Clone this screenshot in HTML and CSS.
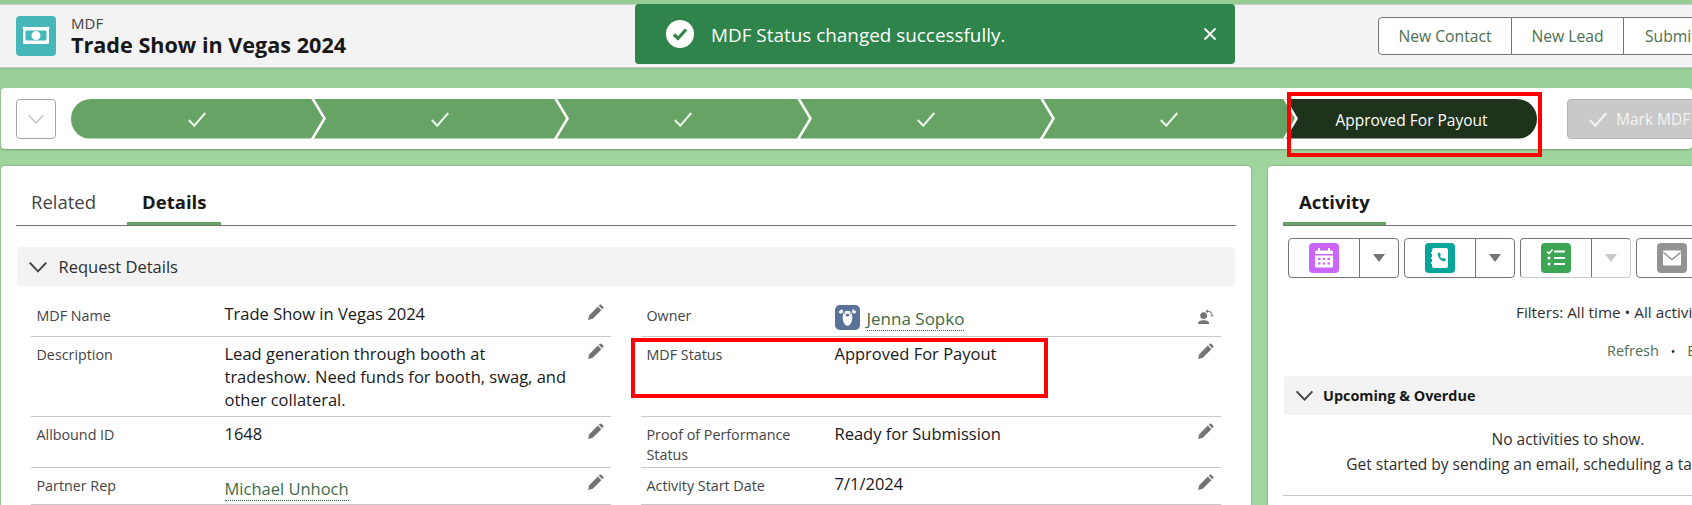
FILE: index.html
```html
<!DOCTYPE html>
<html lang="en">
<head>
<meta charset="utf-8">
<title>Trade Show in Vegas 2024</title>
<link rel="stylesheet" href="styles.css">
</head>
<body>
<svg class="defs" width="0" height="0" aria-hidden="true">
  <symbol id="pencil" viewBox="0 0 24 24">
    <path d="M1.5 22.5l1.7-6.7L15.3 3.7l5 5L8.2 20.8z"/>
    <path d="M16.6 2.4l1.3-1.3a1.6 1.6 0 0 1 2.2 0l2.8 2.8a1.6 1.6 0 0 1 0 2.2l-1.3 1.3z"/>
  </symbol>
  <symbol id="tick" viewBox="0 0 20 20">
    <path d="M2.5 11l5 5L17.5 4.5" fill="none" stroke="currentColor" stroke-width="1.900"/>
  </symbol>
  <symbol id="chev" viewBox="0 0 20 20">
    <path d="M2.5 6l7.5 8 7.5-8" fill="none" stroke="currentColor" stroke-width="1.800"/>
  </symbol>
</svg>

<header class="highlights">
  <div class="record-title">
    <span class="record-icon">
      <svg viewBox="0 0 40 40" width="40" height="40"><path fill="#fff" fill-rule="evenodd" d="M9 11h22a1 1 0 0 1 2 2v13.500a1.500 1.500 0 0 1-1.500 1.500h-23A1.500 1.500 0 0 1 7 26.500V13a1 1 0 0 1 2-2zm1.500 3.500a2.500 2.500 0 0 1-1 1v8a2.500 2.500 0 0 1 1 1h19a2.500 2.500 0 0 1 1-1v-8a2.500 2.500 0 0 1-1-1zM20 15a4.500 4.500 0 1 1 0 9 4.500 4.500 0 0 1 0-9z"/></svg>
    </span>
    <div class="title-text">
      <div class="object-name">MDF</div>
      <h1 class="record-name">Trade Show in Vegas 2024</h1>
    </div>
  </div>
  <div class="actions">
    <button class="action first">New Contact</button>
    <button class="action lead">New Lead</button>
    <button class="action">Submit for Approval</button>
  </div>
  <div class="toast">
    <svg class="toast-check" viewBox="0 0 28 28" width="28" height="28"><circle cx="14" cy="14" r="14" fill="#fff"/><path d="M8 14.500l4 4 8-9" fill="none" stroke="#2e844a" stroke-width="3.200"/></svg>
    <span class="toast-text">MDF Status changed successfully.</span>
    <svg class="toast-close" viewBox="0 0 14 14" width="14" height="14"><path d="M1.500 1.500l11 11M12.500 1.500l-11 11" stroke="#fff" stroke-width="1.800"/></svg>
  </div>
</header>

<section class="path-card">
  <button class="path-toggle"><svg width="20" height="20"><use href="#chev"/></svg></button>
  <div class="path">
    <div class="step start"><svg width="22" height="22"><use href="#tick"/></svg></div>
    <div class="step"><svg width="22" height="22"><use href="#tick"/></svg></div>
    <div class="step"><svg width="22" height="22"><use href="#tick"/></svg></div>
    <div class="step"><svg width="22" height="22"><use href="#tick"/></svg></div>
    <div class="step"><svg width="22" height="22"><use href="#tick"/></svg></div>
    <div class="step current">Approved For Payout</div>
  </div>
  <button class="mark"><svg width="22" height="22"><use href="#tick"/></svg><span>Mark MDF Status as Complete</span></button>
  <div class="annotation path-mark"></div>
</section>

<main class="columns">
  <section class="card details-card">
    <nav class="tabs">
      <a class="tab">Related</a>
      <a class="tab active">Details</a>
    </nav>
    <div class="section-head">
      <svg width="22" height="22"><use href="#chev"/></svg>
      <span>Request Details</span>
    </div>
    <div class="fields">
      <div class="field edge-row"><div class="label">MDF Name</div><div class="value">Trade Show in Vegas 2024</div><svg class="edit"><use href="#pencil"/></svg></div>
      <div class="field"><div class="label owner-label">Owner</div><div class="value owner">
        <svg class="avatar" viewBox="0 0 26 26" width="25" height="25"><rect width="26" height="26" rx="5" fill="#5a7199"/><path fill="#fff" d="M7 4.500a2.300 2.300 0 1 1-3.200 2.500zM19 4.500a2.300 2.300 0 1 0 3.200 2.500z"/><path fill="#fff" d="M13 6c-3.600 0-5 3-5 6.500 0 4.500 1.800 9 5 9s5-4.500 5-9C18 9 16.600 6 13 6z"/><ellipse cx="13" cy="10.500" rx="2" ry="1.500" fill="#5a7199"/><circle cx="10" cy="8.500" r=".8" fill="#5a7199"/><circle cx="16" cy="8.500" r=".8" fill="#5a7199"/></svg>
        <a class="link">Jenna Sopko</a></div>
        <svg class="edit change" viewBox="0 0 18 18"><circle cx="7" cy="8" r="3.600"/><path d="M1 17c0-3 2.500-4 6-4s6 1 6 4z"/><path d="M10.500 3.500a5 5 0 0 1 5.500 3.500" fill="none" stroke="#747474" stroke-width="1.200"/><path d="M9 3.500l2.500-2v4zM14.500 7.500h3l-1.500 2z"/></svg>
      </div>
      <div class="field"><div class="label">Description</div><div class="value">Lead generation through booth at tradeshow. Need funds for booth, swag, and other collateral.</div><svg class="edit"><use href="#pencil"/></svg></div>
      <div class="field"><div class="label">MDF Status</div><div class="value">Approved For Payout</div><svg class="edit"><use href="#pencil"/></svg><div class="annotation status-mark"></div></div>
      <div class="field"><div class="label">Allbound ID</div><div class="value">1648</div><svg class="edit"><use href="#pencil"/></svg></div>
      <div class="field"><div class="label">Proof of Performance Status</div><div class="value">Ready for Submission</div><svg class="edit"><use href="#pencil"/></svg></div>
      <div class="field edge-row"><div class="label">Partner Rep</div><div class="value rep"><a class="link">Michael Unhoch</a></div><svg class="edit"><use href="#pencil"/></svg></div>
      <div class="field edge-row"><div class="label">Activity Start Date</div><div class="value">7/1/2024</div><svg class="edit"><use href="#pencil"/></svg></div>
    </div>
  </section>

  <section class="card activity-card">
    <nav class="tabs">
      <a class="tab active">Activity</a>
    </nav>
    <div class="publishers">
      <div class="pub">
        <span class="pub-main"><span class="pub-icon event"><svg viewBox="0 0 30 30" width="30" height="30"><path fill="#fff" fill-rule="evenodd" d="M9 5h2v2.500h8V5h2v2.500h1.500A1.500 1.500 0 0 1 24 9v2H6V9a1.500 1.500 0 0 1 1.500-1.500H9zM6 12.500h18V23a1.500 1.500 0 0 1-1.500 1.500h-15A1.500 1.500 0 0 1 6 23zM9 15v2h2.500v-2zm4.800 0v2h2.400v-2zm4.700 0v2H21v-2zM9 19.500v2h2.500v-2zm4.800 0v2h2.400v-2zm4.700 0v2H21v-2z"/></svg></span></span>
        <span class="pub-menu"><i class="tri"></i></span>
      </div>
      <div class="pub">
        <span class="pub-main"><span class="pub-icon call"><svg viewBox="0 0 30 30" width="30" height="30"><path fill="#fff" fill-rule="evenodd" d="M9 5h12a2 2 0 0 1 2 2v16a2 2 0 0 1-2 2H9a2 2 0 0 1-2-2v-2H6v-2h1v-3H6v-2h1v-3H6V9h1V7a2 2 0 0 1 2-2z"/><path fill="#06a59a" d="M12.500 10.500l2-1 1.500 2.500-1 1c.4 1.300 1.300 2.200 2.500 2.700l1-1 2.500 1.500-1 2c-4 .5-8-4-7-8.700z"/></svg></span></span>
        <span class="pub-menu"><i class="tri"></i></span>
      </div>
      <div class="pub task-pub">
        <span class="pub-main"><span class="pub-icon task"><svg viewBox="0 0 30 30" width="30" height="30"><path d="M6 8.500l2 2 3.500-4" fill="none" stroke="#fff" stroke-width="1.600"/><path d="M13 8.500h11M13 15h11M13 21h11" stroke="#fff" stroke-width="2"/><circle cx="8" cy="15" r="1.500" fill="#fff"/><circle cx="8" cy="21" r="1.500" fill="#fff"/></svg></span></span>
        <span class="pub-menu"><i class="tri pale"></i></span>
      </div>
      <div class="pub email-pub">
        <span class="pub-main"><span class="pub-icon email"><svg viewBox="0 0 30 30" width="30" height="30"><rect x="6" y="7.500" width="18" height="15" rx="1" fill="#fff"/><path d="M6.500 9.500L15 16.500l8.500-7" fill="none" stroke="#939393" stroke-width="1.500"/></svg></span></span>
        <span class="pub-menu"><i class="tri pale"></i></span>
      </div>
    </div>
    <p class="filters">Filters: All time • All activities • All types</p>
    <p class="refresh"><a>Refresh</a><span class="dot">•</span><a>Expand All</a><span class="dot">•</span><a>View All</a></p>
    <div class="section-head upcoming">
      <svg width="21" height="21"><use href="#chev"/></svg>
      <span>Upcoming &amp; Overdue</span>
    </div>
    <div class="empty">
      <p>No activities to show.</p>
      <p>Get started by sending an email, scheduling a task, and more.</p>
    </div>
  </section>
</main>
</body>
</html>
```
FILE: styles.css
```css
* { box-sizing: border-box; }
html, body { margin: 0; height: 505px; overflow: hidden; }
body {
  width: 1692px;
  padding-top: 4px;
  background: linear-gradient(#95cd94, #a0d59d 170px);
  font-family: "Open Sans", "Liberation Sans", sans-serif;
  color: #181818;
}
.defs { position: absolute; }
p, h1 { margin: 0; }
button { font: inherit; padding: 0; background: none; }

.highlights {
  position: relative;
  display: flex;
  align-items: center;
  height: 64px;
  background: #f3f3f3;
  border-top: 1px solid #c9d2c9;
  border-bottom: 1px solid #c4c8c4;
  box-shadow: 0 1px 2px rgba(0,0,0,.1);
}
.record-title {
  flex: 0 0 1378px;
  display: flex;
  align-items: center;
  gap: 15px;
  padding-left: 16px;
}
.record-icon { width: 40px; height: 40px; border-radius: 4px; background: #45b7b9; display: block; }
.record-icon svg { display: block; }
.object-name { font-size: 15px; line-height: 18px; color: #444; }
.record-name { font-size: 21.6px; line-height: 26px; font-weight: 700; }

.actions { flex: none; display: flex; height: 38px; white-space: nowrap; }
.action {
  height: 38px;
  padding: 0 21px;
  font-size: 15.7px;
  color: #4d6e50;
  background: #fff;
  border: 1px solid #747474;
  border-left: 0;
}
.action.first { width: 134px; padding: 0; border-left: 1px solid #747474; border-radius: 4px 0 0 4px; }
.action.lead { width: 112px; padding: 0; }

.toast {
  position: absolute;
  left: 635px;
  top: -1px;
  width: 600px;
  height: 60px;
  display: flex;
  align-items: center;
  padding: 0 18px 0 31px;
  background: #2e844a;
  border-radius: 4px;
  color: #fff;
}
.toast-text { margin-left: 17px; padding-top: 1px; font-size: 18.9px; flex: 1; }

.path-card {
  position: relative;
  display: flex;
  align-items: center;
  height: 61px;
  margin: 20px 0 0 1px;
  padding-left: 15px;
  background: #fff;
  border-radius: 4px;
  box-shadow: 0 1px 2px rgba(0,0,0,.25);
  white-space: nowrap;
}
.path-toggle {
  flex: none;
  width: 40px;
  height: 40px;
  display: flex;
  align-items: center;
  justify-content: center;
  border: 1px solid #a5a5a5;
  border-radius: 4px;
  background: #fff;
  color: #c9c9c9;
}
.path {
  flex: none;
  display: flex;
  width: 1466px;
  height: 40px;
  margin-left: 15px;
  border-radius: 20px;
  overflow: hidden;
}
.step {
  flex: none;
  width: 252px;
  height: 40px;
  margin-right: -9px;
  display: flex;
  align-items: center;
  justify-content: center;
  background: #67a365;
  color: #e8f2e6;
  clip-path: polygon(0 0, calc(100% - 12px) 0, 100% 50%, calc(100% - 12px) 100%, 0 100%, 12px 50%);
}
.step.start { clip-path: polygon(0 0, calc(100% - 12px) 0, 100% 50%, calc(100% - 12px) 100%, 0 100%); }
.step.current {
  width: 251px;
  margin-right: 0;
  padding-top: 2px;
  background: #1f331c;
  color: #fff;
  font-size: 15.5px;
  clip-path: polygon(0 0, 100% 0, 100% 100%, 0 100%, 12px 50%);
}
.mark {
  flex: none;
  width: 300px;
  height: 40px;
  margin-left: 30px;
  display: flex;
  align-items: center;
  gap: 7px;
  padding-left: 19px;
  background: #c9c9c9;
  border: 1px solid #b4b4b4;
  border-radius: 4px;
  color: #f3f3f3;
  font-size: 15.5px;
}

.annotation { position: absolute; border: 4px solid #f00; pointer-events: none; }
.path-mark { left: 1286px; top: 4px; width: 255px; height: 65px; }
.status-mark { left: -10px; top: 1px; width: 417px; height: 60px; }

.columns { display: flex; gap: 17px; margin: 17px 0 0 1px; }
.card {
  flex: none;
  height: 400px;
  background: #fff;
  border-radius: 4px;
  box-shadow: 0 0 2px rgba(0,0,0,.3);
}
.details-card { width: 1250px; padding: 0 15px; }
.activity-card { width: 600px; padding: 0 15px; }

.tabs {
  display: flex;
  height: 60px;
  align-items: flex-end;
  border-bottom: 1px solid #747474;
}
.tab {
  display: block;
  height: 38px;
  padding: 2px 15px 0;
  font-size: 18.5px;
  line-height: 26px;
  color: #444;
}
.tab + .tab { margin-left: 16px; }
.tab.active {
  padding: 2px 15px 0;
  font-weight: 700;
  color: #181818;
  border-bottom: 3px solid #67a365;
}
.activity-card .tab.active { padding: 2px 16px 0; }

.section-head {
  display: flex;
  align-items: center;
  gap: 9.5px;
  height: 39px;
  margin: 21px 1px 0 1px;
  padding-left: 10px;
  background: #f3f3f3;
  border-radius: 4px;
  font-size: 16.5px;
  color: #2e2e2e;
}
.section-head svg { color: #444; }

.fields {
  display: grid;
  grid-template-columns: 580px 580px;
  grid-template-rows: 40px 80px 50.5px 37px;
  column-gap: 30px;
  margin: 11px 0 0 15px;
}
.field {
  position: relative;
  display: grid;
  grid-template-columns: 188px 1fr 18px;
  align-items: start;
  padding: 4.5px 6px 0 5.5px;
  border-bottom: 1px solid #c9c9c9;
}
.field.edge-row { padding-top: 5.5px; }
.label { padding: 3px 24px 0 0; font-size: 14.3px; line-height: 20px; color: #444; }
.owner-label { padding-top: 4px; }
.value { max-width: 348px; font-size: 16.5px; line-height: 23px; color: #181818; }
.edge-row .value { margin-top: -1px; }
.owner { display: flex; align-items: flex-start; gap: 7px; padding-top: 3px; }
.avatar { flex: none; }
.owner .link { margin-top: 2px; font-size: 17px; }
.edge-row .rep { margin-top: 0; padding-top: 4px; }
.link { color: #3e6b45; border-bottom: 1px dotted #3e6b45; }
.edit { width: 17px; height: 17px; fill: #747474; margin-top: 1px; }
.change { margin-top: 6px; }

.publishers { display: flex; gap: 5.5px; margin: 12px 0 0 5px; white-space: nowrap; }
.pub {
  flex: none;
  display: flex;
  width: 110.500px;
  height: 39.500px;
  border: 1px solid #747474;
  border-radius: 4px;
  background: #fff;
}
.pub-main {
  width: 71px;
  display: flex;
  align-items: center;
  justify-content: center;
  border-right: 1px solid #747474;
}
.task-pub { border-color: #747474 #c9c9c9 #c9c9c9 #747474; }
.pub-icon { width: 30px; height: 30px; border-radius: 4px; display: block; }
.pub-icon svg { display: block; }
.event { background: #cb65ff; }
.call { background: #06a59a; }
.task { background: #3ba755; }
.email { background: #939393; }
.pub-menu { flex: 1; display: flex; align-items: center; justify-content: center; }
.tri {
  display: block;
  width: 0;
  height: 0;
  border: 6.500px solid transparent;
  border-top: 8px solid #747474;
  border-bottom: 0;
}
.tri.pale { border-top-color: #c9c9c9; }

.filters { margin: 24px 0 0 233px; font-size: 15.3px; line-height: 20px; color: #2e2e2e; white-space: nowrap; }
.refresh { margin: 19px 0 0 324px; font-size: 14.5px; line-height: 20px; color: #4d6e50; white-space: nowrap; }
.dot { margin: 0 12px; color: #181818; font-size: 12px; }
.section-head.upcoming {
  margin: 14px 0 0 1px;
  gap: 8.5px;
  padding-left: 9.5px;
  font-size: 14.4px;
  font-weight: 700;
  color: #181818;
}
.empty {
  padding: 12.5px 0 18px;
  border-bottom: 1px solid #c9c9c9;
  text-align: center;
  font-size: 15.5px;
  line-height: 25px;
  color: #2e2e2e;
}
```
